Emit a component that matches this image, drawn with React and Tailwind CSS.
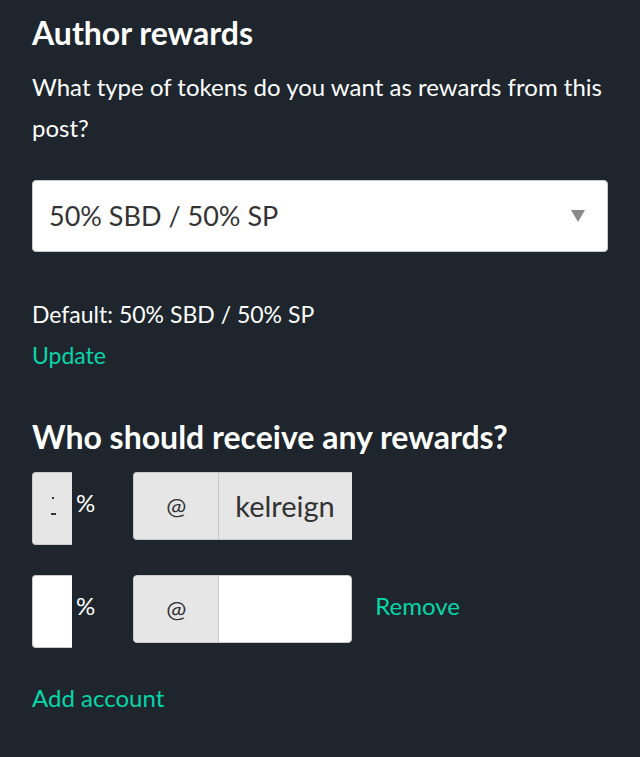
import React from "react";

const teal = "text-[#06d6a9]";

const App = () => {
  return (
    <div className="min-h-[757px] w-[640px] bg-[#1e252c] px-8 pt-[13px] font-['Lato','Noto_Sans',sans-serif] text-white">
      {/* Author rewards */}
      <h2 className="text-[32px] leading-[40px] font-bold">Author rewards</h2>
      <p className="mt-[13px] text-[24px] leading-[41px]">
        What type of tokens do you want as rewards from this post?
      </p>

      <div className="relative mt-[32px] flex h-[72px] items-center rounded-[4px] border border-[#cacaca] bg-white px-4">
        <span className="text-[27px] text-[#333]">50% SBD / 50% SP</span>
        <svg
          className="absolute right-[22px] top-[29px]"
          width="14"
          height="12"
          viewBox="0 0 14 12"
        >
          <path d="M0 0 H14 L7 12 Z" fill="#8a8a8a" />
        </svg>
      </div>

      <p className="mt-[46px] text-[23px] leading-[32px]">Default: 50% SBD / 50% SP</p>
      <button className={`mt-[9px] block text-[23px] leading-[32px] ${teal}`}>Update</button>

      {/* Beneficiaries */}
      <h2 className="mt-[46px] text-[32px] leading-[40px] font-bold">
        Who should receive any rewards?
      </h2>

      <div className="mt-[15px] flex items-start">
        <div className="relative h-[73px] w-[40px] rounded-l-[4px] border border-r-0 border-[#cacaca] bg-[#e6e6e6]">
          <span className="absolute left-[19px] top-[24px] h-[2px] w-[2px] bg-[#333]" />
          <span className="absolute left-[18px] top-[40px] h-[2px] w-[5px] bg-[#333]" />
        </div>
        <span className="ml-[4px] mt-[17px] text-[24px] leading-[28px]">%</span>
        <div className="ml-[38px] flex h-[68px] w-[219px] overflow-hidden rounded-l-[4px] border border-r-0 border-[#cacaca] bg-[#e6e6e6] text-[#333]">
          <span className="flex w-[85px] items-center justify-center border-r border-[#c8c8c8] text-[24px]">@</span>
          <span className="flex flex-1 items-center pl-[16px] text-[29px]">kelreign</span>
        </div>
      </div>

      <div className="mt-[30px] flex items-start">
        <div className="h-[73px] w-[40px] rounded-l-[4px] border border-r-0 border-[#cacaca] bg-white" />
        <span className="ml-[4px] mt-[17px] text-[24px] leading-[28px]">%</span>
        <div className="ml-[38px] flex h-[68px] w-[219px] overflow-hidden rounded-[4px] border border-[#cacaca] bg-white text-[#333]">
          <span className="flex w-[85px] items-center justify-center border-r border-[#c8c8c8] bg-[#e6e6e6] text-[24px]">@</span>
          <span className="flex-1" />
        </div>
        <button className={`ml-[23px] mt-[16px] text-[24px] leading-[30px] ${teal}`}>Remove</button>
      </div>

      <button className={`mt-[35px] block text-[24px] leading-[30px] ${teal}`}>Add account</button>
    </div>
  );
};

export default App;
